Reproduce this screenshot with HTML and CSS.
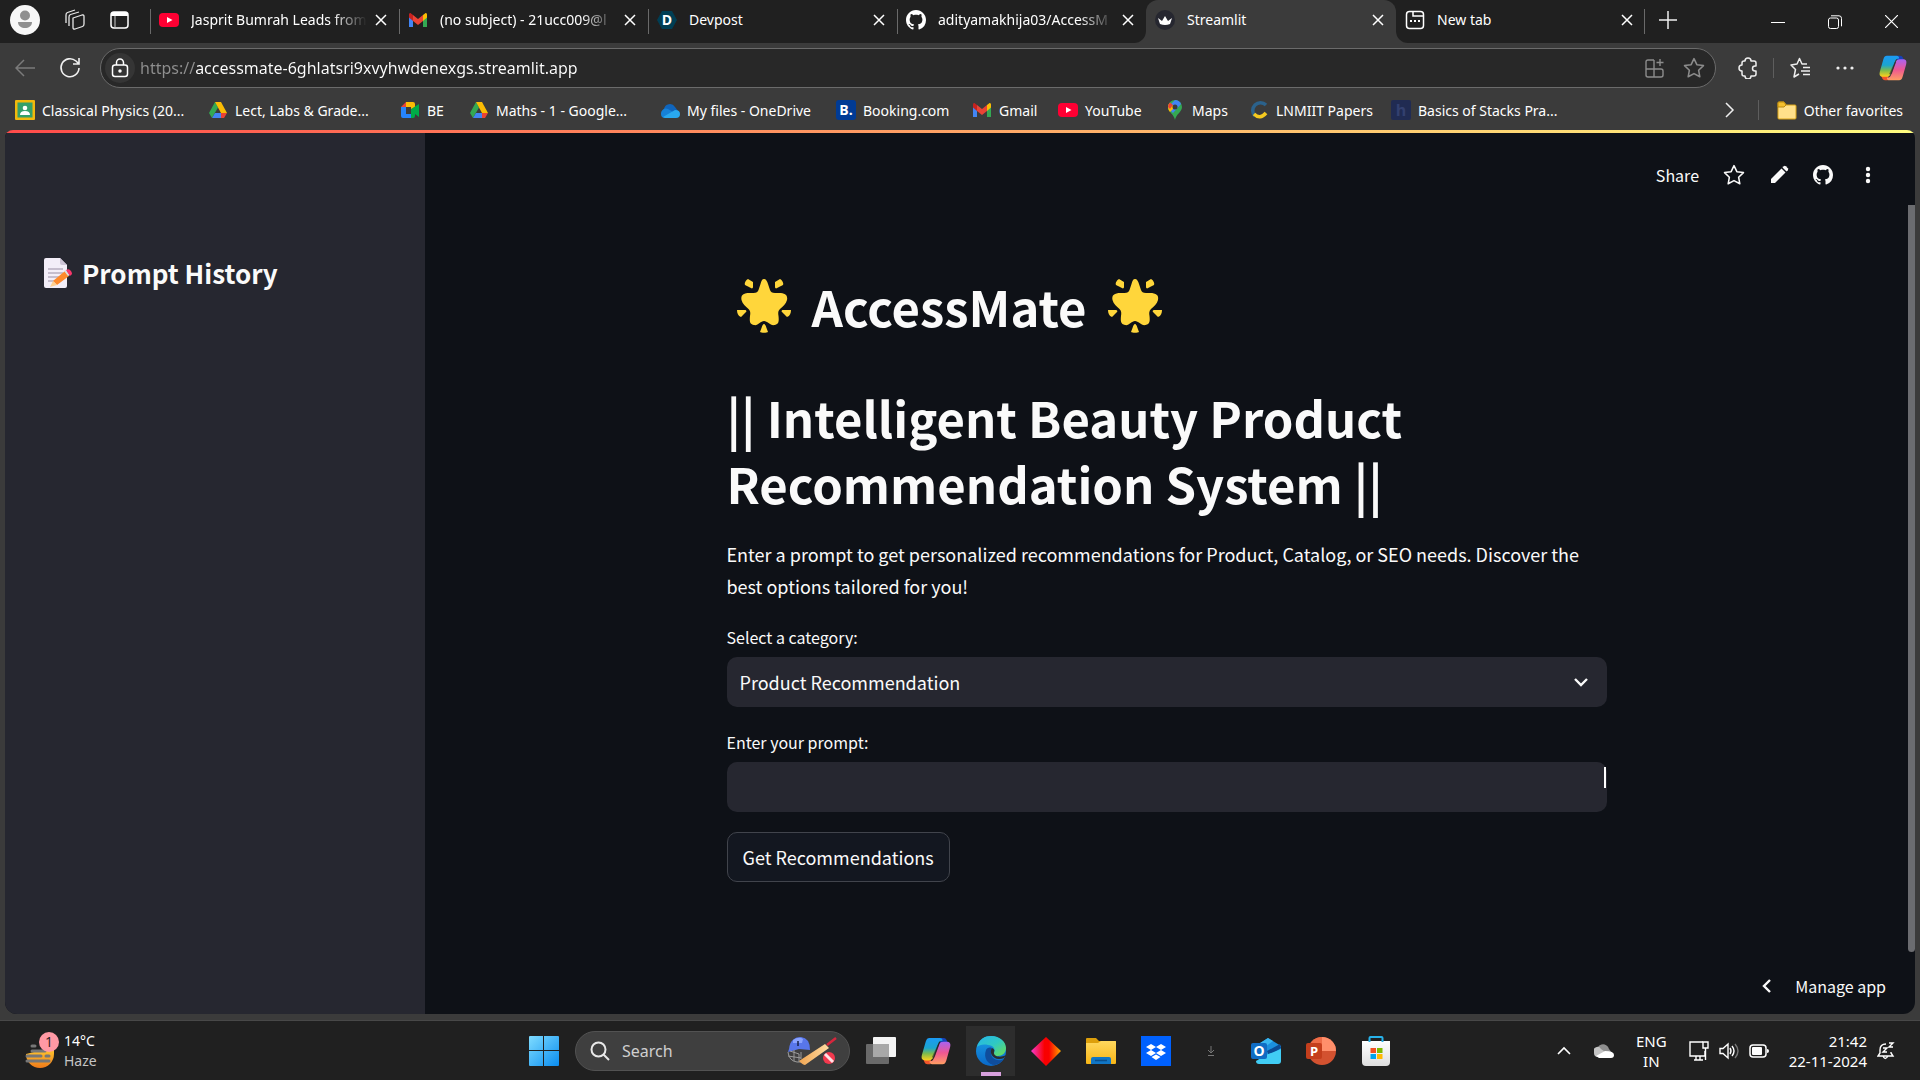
FILE: index.html
```html
<!DOCTYPE html>
<html lang="en">
<head>
<meta charset="utf-8">
<meta name="viewport" content="width=device-width, initial-scale=1">
<title>Streamlit</title>
<link rel="stylesheet" href="styles.css">
</head>
<body>
<svg class="defs" width="0" height="0" aria-hidden="true">
  <defs>
    <linearGradient id="cp-a" x1="0" y1="0" x2="0" y2="1"><stop offset="0" stop-color="#1b9af5"/><stop offset=".45" stop-color="#1ba5cf"/><stop offset=".7" stop-color="#7dbb4c"/><stop offset="1" stop-color="#ffd21a"/></linearGradient>
    <linearGradient id="cp-b" x1="0" y1="0" x2="0" y2="1"><stop offset="0" stop-color="#a862f2"/><stop offset=".5" stop-color="#ee5792"/><stop offset="1" stop-color="#ff9d63"/></linearGradient>
    <linearGradient id="edge-g" x1="0" y1="0" x2="1" y2="1"><stop offset="0" stop-color="#27b5e8"/><stop offset=".5" stop-color="#2fc9c3"/><stop offset="1" stop-color="#6fe04e"/></linearGradient>
    <linearGradient id="edge-b" x1="0" y1="0" x2="0" y2="1"><stop offset="0" stop-color="#1a9fe6"/><stop offset="1" stop-color="#0a68c8"/></linearGradient>
    <linearGradient id="win-g" gradientUnits="userSpaceOnUse" x1="0" y1="0" x2="30" y2="30"><stop offset="0" stop-color="#7fdcff"/><stop offset="1" stop-color="#0a8df0"/></linearGradient>
    <linearGradient id="dia-g"><stop offset="0" stop-color="#f53bd0"/><stop offset=".45" stop-color="#f90000"/><stop offset=".6" stop-color="#f90000"/><stop offset="1" stop-color="#ffa800"/></linearGradient>
    <linearGradient id="fold-g" x1="0" y1="0" x2="0" y2="1"><stop offset="0" stop-color="#ffd85e"/><stop offset="1" stop-color="#f7b516"/></linearGradient>
    <linearGradient id="sun-g" x1="0" y1="0" x2="0" y2="1"><stop offset="0" stop-color="#ffc52e"/><stop offset="1" stop-color="#ef7a1a"/></linearGradient>
    <linearGradient id="bat-g"><stop offset="0" stop-color="#f0a552"/><stop offset="1" stop-color="#ffdca2"/></linearGradient>
    <linearGradient id="shop-g" x1="0" y1="0" x2="0" y2="1"><stop offset="0" stop-color="#fff"/><stop offset="1" stop-color="#dedede"/></linearGradient>

    <symbol id="i-close" viewBox="0 0 12 12"><path d="M1 1l10 10M11 1L1 11" stroke="currentColor" stroke-width="1.5" fill="none"/></symbol>
    <symbol id="i-youtube" viewBox="0 0 20 20"><rect y="3" width="20" height="14" rx="4" fill="#ff0033"/><path d="M8 7l5.500 3L8 13z" fill="#fff"/></symbol>
    <symbol id="i-gmail" viewBox="0 0 20 20"><path d="M1 5v12h4V8z" fill="#4285f4"/><path d="M19 5v12h-4V8z" fill="#34a853"/><path d="M15 5l2-1.600c1.200-.8 2 0 2 1.600v2.500L15 11z" fill="#fbbc04"/><path d="M5 5L3 3.400C1.800 2.600 1 3.400 1 5v2.500L5 11z" fill="#c5221f"/><path d="M5 5l5 4 5-4v6l-5 4-5-4z" fill="#ea4335"/></symbol>
    <symbol id="i-github" viewBox="0 0 16 16"><path fill="currentColor" d="M8 0C3.580 0 0 3.580 0 8c0 3.540 2.290 6.530 5.470 7.590.4.070.55-.17.55-.38 0-.19-.01-.82-.01-1.490-2.010.37-2.530-.49-2.690-.94-.09-.23-.48-.94-.82-1.130-.28-.15-.68-.52-.01-.53.63-.01 1.080.58 1.230.82.72 1.210 1.870.87 2.330.66.070-.52.280-.87.510-1.070-1.780-.2-3.640-.89-3.640-3.950 0-.87.31-1.590.82-2.150-.08-.2-.36-1.020.08-2.120 0 0 .67-.21 2.200.82.640-.18 1.320-.27 2-.27s1.360.09 2 .27c1.530-1.040 2.200-.82 2.200-.82.440 1.100.160 1.920.080 2.120.51.56.82 1.270.82 2.150 0 3.070-1.870 3.750-3.650 3.950.29.25.54.73.54 1.480 0 1.070-.01 1.930-.01 2.200 0 .21.15.46.55.38A8.010 8.010 0 0016 8c0-4.420-3.580-8-8-8z"/></symbol>
    <symbol id="i-drive" viewBox="0 0 20 20"><path d="M7 2h6l-3 5.500z" fill="#188038"/><path d="M7 2L1 13l3 5 6-10.500z" fill="#34a853"/><path d="M13 2H7l6 11h6z" fill="#fbbc04"/><path d="M4 18l3-5h7l-1 5z" fill="#4285f4"/><path d="M13 13h6l-3 5h-3z" fill="#ea4335"/></symbol>
    <symbol id="i-copilot" viewBox="0 0 32 32"><path d="M20 2h4c2 0 3 1 4 4l1 3h-8z" fill="#1742b8"/><path d="M10 30H7c-2 0-3-1-4-4l-1-3h9z" fill="#f1552b"/><path d="M9 2h11c2 0 3 1 3 3-3 0-4 1-5 4l-5 14c-1 2-2 3-5 3H5c-4 0-5-2-4-6L5 6c1-3 2-4 4-4z" fill="url(#cp-a)"/><path d="M23 30H12c-2 0-3-1-3-3 3 0 4-1 5-4l5-13c1-3 2-4 5-4h3c4 0 5 2 4 6l-4 14c-1 3-2 4-4 4z" fill="url(#cp-b)"/><path d="M18 9l1.500 0-5 14h-3z" fill="#2a2a2a" opacity=".6"/></symbol>
    <symbol id="i-star" viewBox="0 0 20 20"><path d="M10 1.500l2.600 5.500 6 .8-4.400 4.200 1.100 6L10 15.100 4.700 18l1.100-6L1.400 7.800l6-.8z" fill="none" stroke="currentColor" stroke-linejoin="round" stroke-width="1.400"/></symbol>
    <symbol id="i-glow" viewBox="0 0 56 56"><g fill="#ffd63b"><path d="M28 1c2 0 3.200 2 4 5l2 6c.7 2 2 3 5 3h4c6 0 9 2 8 7-1 4-4 6-7 9-2 2-2 4-1.500 7 .5 5 .5 8-4 9-4 1-7-4-10.500-4S22 48 18 47c-4.500-1-4.500-4-4-9 .5-3 .5-5-1.500-7-3-3-6-5-7-9-1-5 2-7 8-7h4c3 0 4.300-1 5-3l2-6c.8-3 1.500-5 3.500-5z"/><path d="M12 1l5 3v5c0 1-1 2-2 1L9 7C8 5 10 2 12 1zM44 1l-5 3v5c0 1 1 2 2 1l6-3c1-2-1-5-3-6zM1 32l8 0c1 0 2 1 1 2l-5 5c-3-1-4-4-4-7zM55 32h-8c-1 0-2 1-1 2l5 5c3-1 4-4 4-7zM28 46c1 0 1.500 1 2.500 4l1.500 4c-1 1-7 1-8 0l1.500-4c1-3 1.500-4 2.500-4z"/></g></symbol>
  </defs>
</svg>

<header class="browser">
  <div class="tabstrip">
    <div class="strip-left">
      <div class="strip-tools">
        <button class="icon-btn" aria-label="Profile"><svg width="30" height="30" viewBox="0 0 30 30"><circle cx="15" cy="15" r="15" fill="#f7f7f7"/><circle cx="15" cy="10.500" r="5" fill="#8f8f8f"/><path d="M8 17h14c0 8-14 8-14 0z" fill="#8f8f8f"/></svg></button>
        <button class="icon-btn" aria-label="Workspaces"><svg width="22" height="22" viewBox="0 0 22 22" fill="none" stroke="#e6e6e6" stroke-width="1.300" stroke-linejoin="round"><path d="M9 9l9-3q2-.5 2 1.500V15q0 2-1.500 2.500L11 20q-2 .5-2-1.500z"/><path d="M5 17V8q0-2 1.500-2.500L15 3M2 14V6q0-2 1.500-2.500L11 1"/></svg></button>
        <button class="icon-btn" aria-label="Tab actions"><svg width="20" height="20" viewBox="0 0 20 20"><rect x="1" y="2" width="17" height="16" rx="3" fill="none" stroke="#fff" stroke-width="1.500"/><path d="M1 6V5q0-3 3-3h11q3 0 3 3v1z" fill="#fff"/><path d="M5 6v12" stroke="#ccc" stroke-width="1"/></svg></button>
      </div>
      <div class="tab"><a href="#"><svg class="fav"><use href="#i-youtube"/></svg><span class="tab-title fade">Jasprit Bumrah Leads from</span></a><button aria-label="Close tab"><svg><use href="#i-close"/></svg></button></div>
      <div class="tab"><a href="#"><svg class="fav"><use href="#i-gmail"/></svg><span class="tab-title fade">(no subject) - 21ucc009@l</span></a><button aria-label="Close tab"><svg><use href="#i-close"/></svg></button></div>
      <div class="tab"><a href="#"><svg class="fav" viewBox="0 0 20 20"><path d="M5 1h10l5 9-5 9H5l-5-9z" fill="#003e54"/><text x="10" y="15" class="glyph" font-size="14">D</text></svg><span class="tab-title">Devpost</span></a><button aria-label="Close tab"><svg><use href="#i-close"/></svg></button></div>
      <div class="tab"><a href="#"><svg class="fav"><use href="#i-github"/></svg><span class="tab-title fade">adityamakhija03/AccessM</span></a><button aria-label="Close tab"><svg><use href="#i-close"/></svg></button></div>
    </div>
    <div class="strip-active">
      <div class="tab active"><a href="#" aria-current="page"><svg class="fav" viewBox="0 0 20 20"><circle cx="10" cy="10" r="10" fill="#262730"/><path d="M3 8l4 3 3-5 3 5 4-3-2 6q-5 2-10 0z" fill="#fff"/></svg><span class="tab-title">Streamlit</span></a><button aria-label="Close tab"><svg><use href="#i-close"/></svg></button></div>
    </div>
    <div class="strip-right">
      <div class="tab"><a href="#"><svg class="fav" viewBox="0 0 20 20" fill="none" stroke="#fff" stroke-width="1.500"><rect x="1.500" y="1.500" width="17" height="17" rx="3"/><path d="M8 1.500V6h10"/><path d="M5 11h2M9 11h2M13 11h2" stroke-width="2"/></svg><span class="tab-title">New tab</span></a><button aria-label="Close tab"><svg><use href="#i-close"/></svg></button></div>
      <button class="icon-btn new-tab" aria-label="New tab"><svg width="18" height="18" viewBox="0 0 18 18"><path d="M9 0v18M0 9h18" stroke="#eee" stroke-width="1.500"/></svg></button>
      <div class="window-controls">
        <button class="icon-btn" aria-label="Minimize"><svg width="14" height="14"><path d="M0 7.500h14" stroke="#fff"/></svg></button>
        <button class="icon-btn" aria-label="Restore"><svg width="14" height="14" viewBox="0 0 14 14" fill="none" stroke="#fff"><rect x=".5" y="3" width="10" height="10.500" rx="2"/><path d="M3 .8h8q2.500 0 2.500 2.500v8"/></svg></button>
        <button class="icon-btn" aria-label="Close"><svg width="13" height="13" viewBox="0 0 13 13"><path d="M0 0l13 13M13 0L0 13" stroke="#fff" stroke-width="1.200"/></svg></button>
      </div>
    </div>
  </div>

  <div class="toolbar">
    <button class="icon-btn" aria-label="Back"><svg width="20" height="18" viewBox="0 0 20 18" fill="none" stroke="#7b7b7b" stroke-width="1.500"><path d="M20 9H1M9 1L1 9l8 8"/></svg></button>
    <button class="icon-btn reload" aria-label="Refresh"><svg width="22" height="22" viewBox="0 0 22 22" fill="none" stroke="#f0f0f0" stroke-width="1.600"><path d="M20 11a9 9 0 1 1-3-7l2.500 2.500M20 1v6h-6"/></svg></button>
    <div class="address">
      <button class="lock" aria-label="Site information"><svg width="18" height="20" viewBox="0 0 18 20" fill="none" stroke="#fff" stroke-width="1.500"><rect x="1.500" y="7" width="15" height="11.500" rx="2.500"/><path d="M5.500 7V4.500a3.500 3.500 0 0 1 7 0V7"/><circle cx="9" cy="13" r="1" fill="#fff"/></svg></button>
      <input class="url" type="text" aria-label="Address" value="https://accessmate-6ghlatsri9xvyhwdenexgs.streamlit.app">
      <button class="icon-btn muted" aria-label="App available"><svg width="20" height="20" viewBox="0 0 20 20" fill="none" stroke="currentColor" stroke-width="1.400"><path d="M9 2H3q-2 0-2 2v13q0 2 2 2h13q2 0 2-2v-4q0-2-2-2H1M9 2v17M15 1v7M11.500 4.500h7"/></svg></button>
      <button class="icon-btn muted" aria-label="Add to favorites"><svg width="22" height="22"><use href="#i-star"/></svg></button>
    </div>
    <div class="toolbar-end">
      <button class="icon-btn" aria-label="Extensions"><svg width="20" height="22" viewBox="0 0 20 22" fill="none" stroke="#eee" stroke-width="1.500" stroke-linejoin="round"><path d="M7 4a3 3 0 0 1 6 0h3q2 0 2 2v3h-1a2.500 2.500 0 0 0 0 5h1v3q0 2-2 2h-3a3 3 0 0 1-6 0H6q-2 0-2-2v-3a3 3 0 0 1 0-6V6q0-2 2-2z"/></svg></button>
      <span class="rule"></span>
      <button class="icon-btn" aria-label="Favorites"><svg width="22" height="22" viewBox="0 0 22 22" fill="none" stroke="#eee" stroke-width="1.500" stroke-linejoin="round"><path d="M18 7h-5L10.500 1.500 8 7l-6 1 4.500 4.500L5 20l5-3M14 10.500h7M12 14h9M14 17.500h7"/></svg></button>
      <button class="icon-btn" aria-label="Settings and more"><svg width="18" height="4" fill="#eee"><circle cx="2" cy="2" r="1.600"/><circle cx="9" cy="2" r="1.600"/><circle cx="16" cy="2" r="1.600"/></svg></button>
      <button class="icon-btn" aria-label="Copilot"><svg width="28" height="28"><use href="#i-copilot"/></svg></button>
    </div>
  </div>

  <nav class="bookmarks" aria-label="Favorites bar">
    <div class="bookmark-list">
      <a href="#"><svg viewBox="0 0 20 20"><rect width="20" height="20" rx="1" fill="#f2b90c"/><rect x="2.500" y="2.500" width="15" height="15" fill="#34a06a"/><circle cx="10" cy="8" r="2.300" fill="#fff"/><path d="M5 15q0-4 5-4t5 4z" fill="#fff"/></svg>Classical Physics (20...</a>
      <a href="#"><svg><use href="#i-drive"/></svg>Lect, Labs &amp; Grade...</a>
      <a href="#"><svg viewBox="0 0 20 20"><path d="M1 7l5-5v5z" fill="#ea4335"/><path d="M6 2h7q2 0 2 2v5h-4V7H6z" fill="#fbbc04"/><path d="M1 7h5v7h5v4H3q-2 0-2-2z" fill="#2684fc"/><path d="M11 9l8-5v13l-4-3v2q0 2-2 2h-2z" fill="#00ac47"/></svg>BE</a>
      <a href="#"><svg><use href="#i-drive"/></svg>Maths - 1 - Google...</a>
      <a href="#"><svg viewBox="0 0 20 20"><path d="M4 9a6 6 0 0 1 11-2l3 4-9 3z" fill="#0f65bd"/><path d="M1 14a5 5 0 0 1 7-5l10 6-3 3H5q-4 0-4-4z" fill="#1681d8"/><path d="M3 17l12-7q5 0 5 4 0 4-4 4H5z" fill="#29a8ef"/></svg>My files - OneDrive</a>
      <a href="#"><svg viewBox="0 0 20 20"><rect width="20" height="20" rx="3" fill="#003b95"/><text x="10" y="15" class="glyph" font-size="14">B.</text></svg>Booking.com</a>
      <a href="#"><svg><use href="#i-gmail"/></svg>Gmail</a>
      <a href="#"><svg><use href="#i-youtube"/></svg>YouTube</a>
      <a href="#"><svg viewBox="0 0 20 20"><path d="M10 0a7 7 0 0 1 7 7c0 5-6 7-7 13-1-6-7-8-7-13a7 7 0 0 1 7-7z" fill="#34a853"/><path d="M10 0a7 7 0 0 1 6 4l-8 9-4-4L3 7z" fill="#4285f4"/><path d="M4.500 3L10 7l-5 5q-2-2-2-5 0-2 1.500-4z" fill="#fbbc04"/><path d="M5 2.500L8 5 5 9 3 7q0-3 2-4.500z" fill="#ea4335"/><circle cx="10" cy="7" r="2.500" fill="#3b3b3b"/></svg>Maps</a>
      <a href="#"><svg viewBox="0 0 20 20" fill="none" stroke-width="3.500"><path d="M17 5A7.500 7.500 0 1 0 6 16" stroke="#2b628c"/><path d="M5 14q6 6 12-1" stroke="#f4c91f"/></svg>LNMIIT Papers</a>
      <a href="#"><svg viewBox="0 0 20 20"><rect width="20" height="20" rx="2" fill="#202b52"/><text x="10" y="16" class="glyph dim" font-size="16">h</text></svg>Basics of Stacks Pra...</a>
    </div>
    <div class="bookmark-end">
      <button class="icon-btn" aria-label="More favorites"><svg width="10" height="16" viewBox="0 0 10 16" fill="none" stroke="#eee" stroke-width="1.500"><path d="M1 1l7 7-7 7"/></svg></button>
      <span class="rule"></span>
      <a href="#"><svg viewBox="0 0 20 20"><path d="M1 3q0-1 1-1h5l2 3h9q1 0 1 1v12q0 1-1 1H2q-1 0-1-1z" fill="#ffe08a" stroke="#d9a316"/><path d="M1 3q0-1 1-1h5l2 3-2 2H1z" fill="#f5c02e" stroke="#b98a10"/></svg>Other favorites</a>
    </div>
  </nav>
</header>

<div class="frame">
  <div class="app">
    <aside class="sidebar">
      <h2><svg width="30" height="32" viewBox="0 0 30 32" aria-hidden="true"><path d="M3 1h14l7 7v21q0 2-2 2H3q-2 0-2-2V3q0-2 2-2z" fill="#f3eef8"/><path d="M17 1l7 7h-5q-2 0-2-2z" fill="#cdc4d6"/><path d="M5 12h15M5 16h15M5 20h12M5 24h6" stroke="#998ea4" stroke-width="1.200"/><path d="M10 24l12-10 4 5-12 9z" fill="#ff8a2c"/><path d="M10 24l4 4-7 2z" fill="#ffcf8f"/><path d="M21 14l2-1 4 5-2 1z" fill="#ddd"/><path d="M23 13q3-2 5 1t0 4l-1 1z" fill="#f8366b"/></svg>Prompt History</h2>
    </aside>
    <main class="main">
      <div class="actions">
        <button>Share</button>
        <button aria-label="Favorite"><svg width="22" height="22"><use href="#i-star"/></svg></button>
        <button aria-label="Edit"><svg width="20" height="20" viewBox="0 0 20 20" fill="currentColor"><path d="M2 14L12.500 3.500l4 4L6 18H2z"/><path d="M13.500 2.500l1.300-1.300q1-.8 2 0l2 2q.8 1 0 2l-1.300 1.300z"/></svg></button>
        <button aria-label="View source"><svg width="20" height="20"><use href="#i-github"/></svg></button>
        <button aria-label="Menu"><svg width="6" height="18" viewBox="0 0 6 18" fill="currentColor"><circle cx="3" cy="3" r="2.200"/><circle cx="3" cy="9" r="2.200"/><circle cx="3" cy="15" r="2.200"/></svg></button>
      </div>
      <form class="content">
        <h1 class="title"><svg aria-hidden="true"><use href="#i-glow"/></svg>AccessMate<svg aria-hidden="true"><use href="#i-glow"/></svg></h1>
        <h1>|| Intelligent Beauty Product Recommendation System ||</h1>
        <p>Enter a prompt to get personalized recommendations for Product, Catalog, or SEO needs. Discover the best options tailored for you!</p>
        <div class="field">
          <label for="category">Select a category:</label>
          <div class="select-box">
            <select id="category"><option>Product Recommendation</option></select>
            <svg width="14" height="9" viewBox="0 0 14 9" fill="none" stroke="#fafafa" stroke-width="2.400"><path d="M1 1l6 6 6-6"/></svg>
          </div>
        </div>
        <div class="field">
          <label for="prompt">Enter your prompt:</label>
          <div class="prompt-box"><input id="prompt" type="text"><span class="ibeam"></span></div>
        </div>
        <button class="submit" type="button">Get Recommendations</button>
      </form>
      <button class="manage"><svg width="9" height="14" viewBox="0 0 9 14" fill="none" stroke="#fafafa" stroke-width="2.400"><path d="M8 1L2 7l6 6"/></svg>Manage app</button>
      <span class="scroll-thumb"></span>
    </main>
  </div>
</div>

<footer class="taskbar">
  <button class="weather">
    <svg width="36" height="38" viewBox="0 0 36 38" aria-hidden="true"><path d="M1 22a14 14 0 0 0 28 0v-4H17z" fill="url(#sun-g)"/><path d="M7 14h3M7 19h13M2 24h14M21 24h3M2 29h22" stroke="#777" stroke-width="3" stroke-linecap="round"/><circle cx="24" cy="10" r="10" fill="#ff99a4"/><text x="24" y="15" class="badge-text" font-size="14">1</text></svg>
    <span class="stack"><span>14°C</span><span class="soft">Haze</span></span>
  </button>
  <div class="apps">
    <button class="icon-btn" aria-label="Start"><svg width="30" height="30" viewBox="0 0 30 30" fill="url(#win-g)"><path d="M1 0h13v14H0V1q0-1 1-1zM15 0h14q1 0 1 1v13H15zM0 15h14v15H1q-1 0-1-1zM15 15h15v14q0 1-1 1H15z"/></svg></button>
    <div class="search">
      <svg width="20" height="20" viewBox="0 0 20 20" fill="none" stroke="#e8e8e8" stroke-width="2"><circle cx="8.500" cy="8.500" r="7"/><path d="M13.500 13.500L19 19"/></svg>
      <input type="search" placeholder="Search" aria-label="Search">
      <svg width="50" height="32" viewBox="0 0 50 32" aria-hidden="true"><path d="M2 14C3 5 8 2 14 2q9 1 9 13l-11-1-11 3z" fill="#5876ea"/><path d="M6 5q6-4 10-1l-1 4H6z" fill="#89a2ff"/><path d="M11 6v5" stroke="#16204a" stroke-width="1.500"/><path d="M1 17q1 9 9 10h6M3 16l9 3v8M7 15v11M1 21l13 2M14 17v7" stroke="#9a9a9a" fill="none"/><path d="M12 26L38 9l4 4-24 17q-2 0-6-4z" fill="url(#bat-g)"/><path d="M40 10l9-7" stroke="#d7263d" stroke-width="2.500"/><circle cx="42" cy="23" r="6" fill="#f3394e"/><path d="M38 19l8 8" stroke="#ffe3e6" stroke-width="3"/></svg>
    </div>
    <button class="icon-btn app-tile" aria-label="Task view"><svg width="30" height="30" viewBox="0 0 30 30"><rect x="7" y="1" width="23" height="20" rx="1" fill="#f4f4f4"/><rect x="0" y="8" width="23" height="20" rx="1" fill="#6a6a6a"/><rect x="7" y="8" width="16" height="13" fill="#a8a8a8"/></svg></button>
    <button class="icon-btn app-tile" aria-label="Copilot"><svg width="30" height="30"><use href="#i-copilot"/></svg></button>
    <button class="icon-btn app-tile running" aria-label="Microsoft Edge"><svg width="30" height="30" viewBox="0 0 30 30"><circle cx="15" cy="15" r="15" fill="url(#edge-b)"/><path d="M1 11C3 3 9 0 15 0c9 0 15 6 15 12 0 5-4 8-8 8-3 0-5-1-4-3 2-4-1-8-6-8-5-1-9 0-11 2z" fill="url(#edge-g)"/><path d="M10 14c-3 8 2 15 9 15 4-1 7-3 9-6-6 3-13 0-13-6 0-2 0-3 1-5-3-1-5 0-6 2z" fill="#0f4d9c"/><path d="M16 12c-3 4 0 11 7 11q3 0 5-1l2-3c-5 3-13 2-12-3 1-2 0-3-2-4z" fill="#2a2c2d"/></svg></button>
    <button class="icon-btn app-tile" aria-label="Diamond"><svg width="30" height="30" viewBox="0 0 30 30"><path d="M15 1l15 14-15 15L0 15z" fill="url(#dia-g)"/></svg></button>
    <button class="icon-btn app-tile" aria-label="File Explorer"><svg width="30" height="30" viewBox="0 0 30 30"><path d="M0 3q0-1 1-1h9l3 3h17v6H0z" fill="#dd9f0b"/><path d="M0 7h12l3-2h14q1 0 1 1v21q0 1-1 1H1q-1 0-1-1z" fill="url(#fold-g)"/><path d="M5 28v-5q0-2 2-2h16q2 0 2 2v5z" fill="#1176c5"/><path d="M9 24.500h12" stroke="#0a4f8c" stroke-width="1.500"/></svg></button>
    <button class="icon-btn app-tile" aria-label="Dropbox"><svg width="30" height="30" viewBox="0 0 30 30"><rect width="30" height="30" fill="#0061fe"/><path d="M10 8l5 3-5 3-5-3zM20 8l5 3-5 3-5-3zM10 14l5 3-5 3-5-3zM20 14l5 3-5 3-5-3zM15 18.500l4.500 2.500-4.500 3-4.500-3z" fill="#fff"/></svg></button>
    <button class="icon-btn app-tile" aria-label="Downloads"><svg width="8" height="10" viewBox="0 0 8 10" fill="none" stroke="#777"><path d="M4 0v7M1 4l3 3 3-3M1 9.500h6"/></svg></button>
    <button class="icon-btn app-tile" aria-label="Outlook"><svg width="30" height="30" viewBox="0 0 30 30"><path d="M6 9l11-7 13 8v9H6z" fill="#1b8fdd"/><path d="M6 9l11-7 5 3-12 9z" fill="#38b6f0"/><path d="M16 15l13-7 1 4-12 8z" fill="#0b4a94"/><path d="M30 13v12q0 3-3 3H8q-3 0-3-3l10-6z" fill="#41cdf5"/><rect y="7" width="16" height="16" rx="2" fill="#0f6cc4"/><text x="8" y="20" class="glyph" font-size="14">O</text></svg></button>
    <button class="icon-btn app-tile" aria-label="PowerPoint"><svg width="30" height="30" viewBox="0 0 30 30"><circle cx="16" cy="15" r="14" fill="#d35230"/><path d="M16 1a14 14 0 0 1 14 14H16z" fill="#ff8f6b"/><path d="M16 1a14 14 0 0 0-14 14h14z" fill="#ed6c47"/><rect y="7" width="16" height="16" rx="2" fill="#c43e1c"/><text x="8" y="20" class="glyph" font-size="13">P</text></svg></button>
    <button class="icon-btn app-tile" aria-label="Microsoft Store"><svg width="30" height="30" viewBox="0 0 30 30"><path d="M8.500 7V2q0-1 1-1h11q1 0 1 1v5" fill="none" stroke="#27b2ea" stroke-width="2"/><path d="M1 5h28v21q0 4-4 4H5q-4 0-4-4z" fill="url(#shop-g)"/><path d="M8.500 5v1M21.500 5v1" stroke="#27b2ea" stroke-width="2"/><path d="M9.500 12h5.500v5H9.500z" fill="#f25022"/><path d="M16 12h5.500v5H16z" fill="#7fba00"/><path d="M9.500 18h5.500v5H9.500z" fill="#00a4ef"/><path d="M16 18h5.500v5H16z" fill="#ffb900"/></svg></button>
  </div>
  <div class="tray">
    <button class="icon-btn" aria-label="Hidden icons"><svg width="14" height="9" viewBox="0 0 14 9" fill="none" stroke="#fff" stroke-width="1.600"><path d="M1 8l6-6 6 6"/></svg></button>
    <button class="icon-btn cloud" aria-label="OneDrive"><svg width="20" height="14" viewBox="0 0 20 14"><path d="M3 8a6 6 0 0 1 12-3l3 4-9 3z" fill="#8f8f8f"/><path d="M0 9a4 4 0 0 1 7-4l7 5-4 3H4q-4 0-4-4z" fill="#c4c4c4"/><path d="M2 12l9-5q9 0 9 4 0 3-3 3H5z" fill="#fff"/></svg></button>
    <button class="stack lang"><span>ENG</span><span>IN</span></button>
    <button class="status" aria-label="Network, volume and battery">
      <svg width="20" height="20" viewBox="0 0 20 20" fill="none" stroke="#fff" stroke-width="1.400"><path d="M14 1H1v14h15v-5M5 19h9M7 15v4M11 15v4"/><path d="M14 1h5v6h-5zM16.500 7v12"/></svg>
      <svg width="20" height="18" viewBox="0 0 20 18" fill="none" stroke="#fff" stroke-width="1.400"><path d="M1 6.500h3L9 2v14l-5-4.500H1z"/><path d="M11 6q2 3 0 6M13 4q4 5 0 10"/><path d="M16 2q6 7 0 14" stroke="#777"/></svg>
      <svg width="20" height="14" viewBox="0 0 20 14"><rect x="1" y="1" width="16" height="12" rx="3" fill="none" stroke="#fff" stroke-width="1.500"/><rect x="3" y="3" width="10" height="8" rx="1" fill="#fff"/><path d="M18 5q2 0 2 2t-2 2z" fill="#fff"/></svg>
    </button>
    <button class="stack clock"><span>21:42</span><span>22-11-2024</span></button>
    <button class="icon-btn" aria-label="Notifications"><svg width="18" height="18" viewBox="0 0 18 18" fill="none" stroke="#fff" stroke-width="1.400"><path d="M9 2Q3 2 3 8v3l-2 3h15l-2-3v-1M6 14q2 5 5 0M6 6h4l-4 4h4M12 1h4l-4 4h4"/></svg></button>
  </div>
</footer>
</body>
</html>
```

FILE: styles.css
```css
:root {
  --chrome: #3b3b3b;
  --chrome-dark: #202020;
  --page: #0e1117;
  --panel: #262730;
  --text: #fafafa;
  --ui: "Noto Sans", "Open Sans", sans-serif;
  --app: "Noto Sans CJK JP", "Noto Sans", sans-serif;
}

* { box-sizing: border-box; }

body {
  margin: 0;
  min-height: 100vh;
  display: flex;
  flex-direction: column;
  background: var(--chrome);
  color: #fff;
  font-family: var(--ui);
  overflow-x: hidden;
}

button {
  margin: 0;
  padding: 0;
  border: 0;
  background: none;
  color: inherit;
  font: inherit;
}

a { color: inherit; text-decoration: none; }
svg { display: block; flex: none; }
.defs { position: absolute; }

.icon-btn {
  display: flex;
  align-items: center;
  justify-content: center;
}

.glyph, .badge-text {
  fill: #fff;
  font-family: "Open Sans", sans-serif;
  font-weight: 700;
  text-anchor: middle;
}
.badge-text { fill: #2a1a1c; font-weight: 400; }
.dim { fill: #33406f; }

.rule { width: 1px; height: 20px; background: #5e5e5e; }

/* Tab strip */
.tabstrip { display: flex; height: 43px; }
.strip-left, .strip-right { display: flex; background: var(--chrome-dark); }
.strip-left { border-bottom-right-radius: 12px; }
.strip-right { flex: 1; border-bottom-left-radius: 12px; }
.strip-active { background: var(--chrome-dark); }

.strip-tools {
  width: 150px;
  padding: 0 20px 3px 10px;
  display: flex;
  align-items: center;
  justify-content: space-between;
}

.tab {
  width: 249px;
  height: 100%;
  padding: 0 8px 3px 9px;
  display: flex;
  align-items: center;
  gap: 4px;
  font-size: 14px;
  background: linear-gradient(#6a6a6a, #6a6a6a) 0 9px / 1px 25px no-repeat;
}
.tab.active {
  width: 250px;
  background: var(--chrome);
  border-radius: 12px 12px 0 0;
}
.strip-right .tab {
  background-position: right 9px;
}
.tab a {
  flex: 1;
  min-width: 0;
  display: flex;
  align-items: center;
  gap: 12px;
}
.tab .fav { width: 20px; height: 20px; }
.tab-title { flex: 1; padding-bottom: 2px; white-space: nowrap; overflow: hidden; }
.fade { mask-image: linear-gradient(90deg, #000 80%, transparent); }
.tab button { width: 20px; height: 20px; padding: 4px; }
.tab button svg { width: 12px; height: 12px; }

.new-tab { width: 46px; height: 40px; }
.window-controls { margin-left: auto; display: flex; }
.window-controls .icon-btn { width: 57px; height: 43px; }

/* Toolbar */
.toolbar {
  display: flex;
  align-items: center;
  height: 49px;
  padding: 0 13px 0 15px;
}
.reload { margin-left: 24px; }
.address {
  flex: 1;
  height: 40px;
  margin: 0 22px 0 19px;
  padding: 0 10px 0 4px;
  display: flex;
  align-items: center;
  gap: 18px;
  background: #282828;
  border: 1px solid #6b6b6b;
  border-radius: 20px;
}
.lock {
  width: 30px;
  height: 30px;
  border-radius: 15px;
  background: #353535;
  display: flex;
  align-items: center;
  justify-content: center;
}
.url {
  flex: 1;
  min-width: 0;
  margin-left: -13px;
  padding: 0;
  border: 0;
  font: 16px/24px var(--ui);
  color: transparent;
  background: linear-gradient(90deg, #8f8f8f 56px, #fff 56px);
  background-clip: text;
}
.muted { color: #8c8c8c; }
.toolbar-end { display: flex; align-items: center; gap: 15px; }
.toolbar-end .icon-btn:nth-child(4) { margin: 0 10px; }

/* Favorites bar */
.bookmarks {
  display: flex;
  justify-content: space-between;
  height: 38px;
  padding: 0 17px 2px 15px;
  font-size: 14px;
  white-space: nowrap;
}
.bookmarks a { display: flex; align-items: center; gap: 7px; }
.bookmarks a svg { width: 20px; height: 20px; }
.bookmark-list {
  display: grid;
  grid-template-columns: 193px 192px 69px 191px 176px 136px 86px 107px 84px 142px auto;
}
.bookmark-end { display: flex; align-items: center; }
.bookmark-end .rule { margin: 0 18px 0 23px; }

/* App viewport */
.frame { flex: 1; display: flex; padding: 0 5px 6px; border-bottom: 1px solid #484848; }
.app {
  flex: 1;
  display: flex;
  border-radius: 8px 8px 12px 12px;
  overflow: hidden;
  background:
    linear-gradient(90deg, #ff4b4b, #fffd80) 0 0 / 100% 3px no-repeat,
    var(--page);
  color: var(--text);
  font-family: var(--app);
}
.sidebar {
  width: 420px;
  margin-top: 3px;
  padding: 122px 38px 0;
  background: var(--panel);
}
.sidebar h2 {
  margin: 0;
  display: flex;
  align-items: center;
  gap: 9px;
  font-size: 26px;
  line-height: 36px;
  font-weight: 700;
}

.main {
  flex: 1;
  position: relative;
  display: flex;
  flex-direction: column;
  padding: 20px 7px 0 0;
}
.actions {
  display: flex;
  justify-content: flex-end;
  align-items: center;
  height: 50px;
  padding-right: 37px;
  gap: 24px;
  font-size: 16px;
}
.actions button:last-child { margin-left: 8px; }

.content {
  width: 880px;
  max-width: 100%;
  margin: 73px auto 0;
}
h1 {
  margin: 0;
  font-size: 49px;
  line-height: 66px;
  font-weight: 700;
}
.title {
  display: flex;
  align-items: center;
  gap: 20px;
  padding-left: 9px;
  margin-bottom: 45px;
}
.title svg { width: 56px; height: 56px; }
.content p { margin: 22px 0 20px; font-size: 18px; line-height: 32px; }
.field { margin-bottom: 20px; }
.field label { display: block; margin-bottom: 5px; font-size: 16px; line-height: 30px; }
.select-box { display: grid; align-items: center; }
.select-box select, .select-box svg { grid-area: 1 / 1; }
.select-box svg { justify-self: end; margin-right: 19px; pointer-events: none; }
.select-box select, .prompt-box input {
  appearance: none;
  display: block;
  width: 100%;
  height: 50px;
  padding: 0 13px;
  border: 0;
  border-radius: 10px;
  background: var(--panel);
  color: var(--text);
  font: 18px/26px var(--app);
}
.prompt-box { position: relative; }
.ibeam {
  position: absolute;
  top: 5px;
  right: 1px;
  width: 2px;
  height: 21px;
  background: #fff;
}
.submit {
  height: 50px;
  padding: 0 15px;
  border: 1px solid #41444c;
  border-radius: 10px;
  background: #131720;
  font-size: 18px;
}
.manage {
  margin: auto 22px 12px auto;
  display: flex;
  align-items: center;
  gap: 24px;
  font-size: 16px;
  line-height: 32px;
}
.scroll-thumb {
  position: absolute;
  top: 75px;
  right: 0;
  width: 7px;
  bottom: 62px;
  border-radius: 0 0 4px 4px;
  background: #6b6c70;
}

/* Taskbar */
.taskbar {
  display: grid;
  grid-template-columns: 1fr auto 1fr;
  align-items: center;
  height: 59px;
  background: var(--chrome-dark);
  font-size: 14px;
}
.stack { display: flex; flex-direction: column; line-height: 20px; }
.soft { color: #c4c4c4; }
.weather { justify-self: start; margin-left: 25px; display: flex; align-items: center; gap: 3px; text-align: left; }
.apps { display: flex; align-items: center; padding-left: 12px; }
.search {
  width: 275px;
  height: 40px;
  margin: 0 3px 0 16px;
  padding: 0 12px 0 14px;
  display: flex;
  align-items: center;
  gap: 12px;
  border: 1px solid #525252;
  border-radius: 20px;
  background: #3f3f3f;
}
.search input {
  flex: 1;
  min-width: 0;
  padding: 0;
  border: 0;
  background: none;
  color: #fff;
  font: 16px/24px var(--ui);
}
.search input::placeholder { color: #cfcfcf; opacity: 1; }
.app-tile { width: 55px; height: 50px; }
.running {
  background:
    linear-gradient(#d8a0dd, #d8a0dd) center bottom / 20px 4px no-repeat,
    linear-gradient(#2d2d2d, #2d2d2d) 3px 0 / 49px 50px no-repeat;
}
.tray { justify-self: end; display: flex; align-items: center; margin-right: 25px; }
.cloud { margin-left: 23px; }
.lang { margin: 0 22px; font-size: 15px; text-align: center; }
.status { display: flex; align-items: center; gap: 10px; }
.clock { margin: 0 10px 0 20px; font-size: 15px; text-align: right; }
```
